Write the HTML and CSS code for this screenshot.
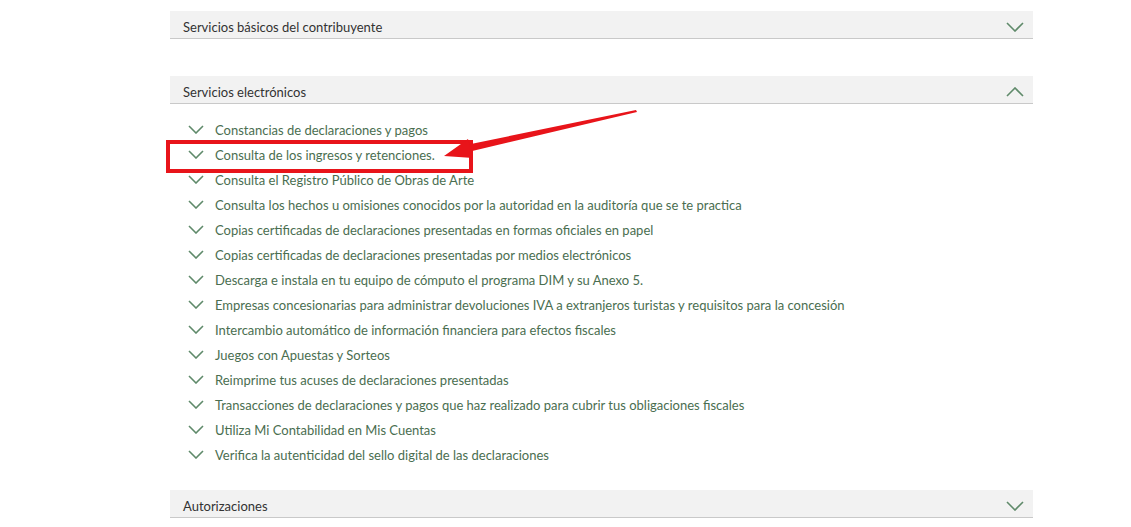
FILE: index.html
```html
<!DOCTYPE html>
<html lang="es">
  <head>
    <meta charset="UTF-8" />
    <title>Trámites y servicios</title>
    <link rel="stylesheet" href="styles.css">
  </head>
  <body>
    <main class="container">
      <section class="panel">
        <div class="panel-head">
          <span>Servicios básicos del contribuyente</span>
          <svg class="chev" width="18" height="10" viewBox="0 0 18 10"><path d="M1 1 L9 9 L17 1" /></svg>
        </div>
      </section>

      <section class="panel open">
        <div class="panel-head">
          <span>Servicios electrónicos</span>
          <svg class="chev" width="18" height="10" viewBox="0 0 18 10"><path d="M1 9 L9 1 L17 9" /></svg>
        </div>
        <ul class="services">
          <li><svg class="item-chev" width="16" height="9" viewBox="0 0 16 9"><path d="M1 1 L8 8 L15 1" /></svg>Constancias de declaraciones y pagos</li>
          <li><svg class="item-chev" width="16" height="9" viewBox="0 0 16 9"><path d="M1 1 L8 8 L15 1" /></svg>Consulta de los ingresos y retenciones.</li>
          <li><svg class="item-chev" width="16" height="9" viewBox="0 0 16 9"><path d="M1 1 L8 8 L15 1" /></svg>Consulta el Registro Público de Obras de Arte</li>
          <li><svg class="item-chev" width="16" height="9" viewBox="0 0 16 9"><path d="M1 1 L8 8 L15 1" /></svg>Consulta los hechos u omisiones conocidos por la autoridad en la auditoría que se te practica</li>
          <li><svg class="item-chev" width="16" height="9" viewBox="0 0 16 9"><path d="M1 1 L8 8 L15 1" /></svg>Copias certificadas de declaraciones presentadas en formas oficiales en papel</li>
          <li><svg class="item-chev" width="16" height="9" viewBox="0 0 16 9"><path d="M1 1 L8 8 L15 1" /></svg>Copias certificadas de declaraciones presentadas por medios electrónicos</li>
          <li><svg class="item-chev" width="16" height="9" viewBox="0 0 16 9"><path d="M1 1 L8 8 L15 1" /></svg>Descarga e instala en tu equipo de cómputo el programa DIM y su Anexo 5.</li>
          <li><svg class="item-chev" width="16" height="9" viewBox="0 0 16 9"><path d="M1 1 L8 8 L15 1" /></svg>Empresas concesionarias para administrar devoluciones IVA a extranjeros turistas y requisitos para la concesión</li>
          <li><svg class="item-chev" width="16" height="9" viewBox="0 0 16 9"><path d="M1 1 L8 8 L15 1" /></svg>Intercambio automático de información financiera para efectos fiscales</li>
          <li><svg class="item-chev" width="16" height="9" viewBox="0 0 16 9"><path d="M1 1 L8 8 L15 1" /></svg>Juegos con Apuestas y Sorteos</li>
          <li><svg class="item-chev" width="16" height="9" viewBox="0 0 16 9"><path d="M1 1 L8 8 L15 1" /></svg>Reimprime tus acuses de declaraciones presentadas</li>
          <li><svg class="item-chev" width="16" height="9" viewBox="0 0 16 9"><path d="M1 1 L8 8 L15 1" /></svg>Transacciones de declaraciones y pagos que haz realizado para cubrir tus obligaciones fiscales</li>
          <li><svg class="item-chev" width="16" height="9" viewBox="0 0 16 9"><path d="M1 1 L8 8 L15 1" /></svg>Utiliza Mi Contabilidad en Mis Cuentas</li>
          <li><svg class="item-chev" width="16" height="9" viewBox="0 0 16 9"><path d="M1 1 L8 8 L15 1" /></svg>Verifica la autenticidad del sello digital de las declaraciones</li>
        </ul>
      </section>

      <section class="panel">
        <div class="panel-head">
          <span>Autorizaciones</span>
          <svg class="chev" width="18" height="10" viewBox="0 0 18 10"><path d="M1 1 L9 9 L17 1" /></svg>
        </div>
      </section>
    </main>

    <!-- annotation: red box and arrow drawn over the list -->
    <div class="mark-box"></div>
    <svg class="arrow" width="1131" height="527" viewBox="0 0 1131 527">
      <polygon points="636,110 637,112 468,152 466,145" fill="#e8141a" />
      <polygon points="444,156 468,139 473,158" fill="#e8141a" />
    </svg>
  </body>
</html>
```

FILE: styles.css
```css
* {
  margin: 0;
  padding: 0;
  box-sizing: border-box;
}

body {
  font-family: Lato, "Open Sans", sans-serif;
  background-color: #ffffff;
  color: #333333;
  width: 1131px;
  height: 527px;
  overflow: hidden;
}

.container {
  width: 863px;
  margin-left: 170px;
  padding-top: 11px;
}

.panel {
  margin-bottom: 37px;
}

.panel.open {
  margin-bottom: 23px;
}

.panel-head {
  display: flex;
  justify-content: space-between;
  align-items: center;
  height: 28px;
  padding: 4px 9px 0 13px;
  background-color: #f2f2f2;
  border-bottom: 1px solid #c9c9c9;
  font-size: 13px;
  color: #333333;
}

.chev path,
.item-chev path {
  fill: none;
  stroke: #5f8a6a;
  stroke-width: 1.6;
}

.services {
  list-style: none;
  padding: 13px 0 0 18px;
}

.services li {
  display: flex;
  align-items: center;
  height: 25px;
  font-size: 13px;
  color: #4a6e50;
}

.item-chev {
  margin-right: 11px;
  flex-shrink: 0;
}

.mark-box {
  position: absolute;
  left: 166px;
  top: 140px;
  width: 307px;
  height: 33px;
  border: 4px solid #e8141a;
}

.arrow {
  position: absolute;
  left: 0;
  top: 0;
  pointer-events: none;
}
```
